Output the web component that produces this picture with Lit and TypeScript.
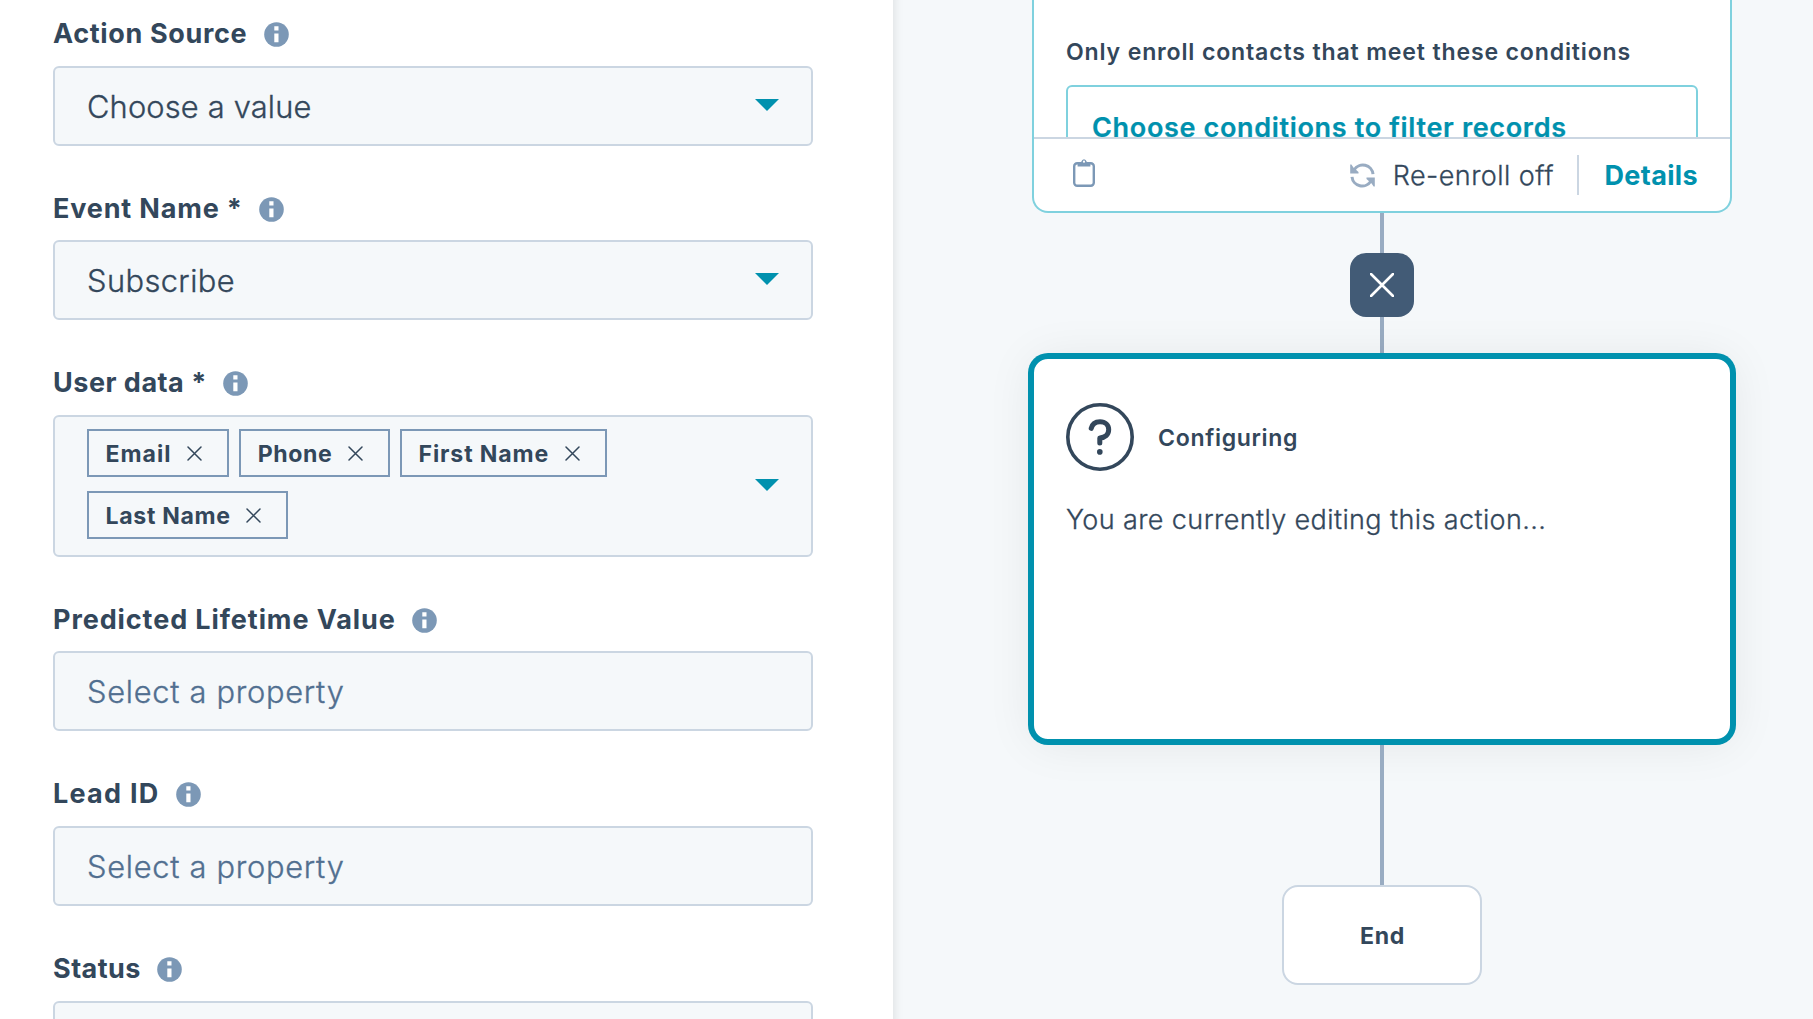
import { LitElement, html, css, svg, nothing } from "lit";
import { customElement, property } from "lit/decorators.js";
import { classMap } from "lit/directives/class-map.js";

interface Tag {
  label: string;
  tracking: number;
}

interface Field {
  label: string;
  tracking: number;
  kind: "select" | "tags" | "property";
  value?: string;
  valueTracking?: number;
  tags?: Tag[];
  tight?: boolean;
}

const FIELDS: Field[] = [
  { label: "Action Source", tracking: 0.65, kind: "select", value: "Choose a value", valueTracking: 0.18 },
  { label: "Event Name *", tracking: 0.83, kind: "select", value: "Subscribe", valueTracking: 0.42, tight: true },
  {
    label: "User data *",
    tracking: 0.5,
    kind: "tags",
    tags: [
      { label: "Email", tracking: 1.0 },
      { label: "Phone", tracking: 0.62 },
      { label: "First Name", tracking: 0.88 },
      { label: "Last Name", tracking: 0.68 },
    ],
  },
  { label: "Predicted Lifetime Value", tracking: 0.91, kind: "property", value: "Select a property", valueTracking: 0.72, tight: true },
  { label: "Lead ID", tracking: 1.25, kind: "property", value: "Select a property", valueTracking: 0.72 },
  { label: "Status", tracking: 0.45, kind: "property" },
];

const infoIcon = svg`<svg class="info" viewBox="0 0 25 25" width="25" height="25">
  <circle cx="12.5" cy="12.5" r="12.3" fill="#7c98b6"/>
  <path d="M10.3 4.3h4.2v4.2h-4.2zM10.3 11.4h4.2v8.8h-4.2z" fill="#fff"/>
</svg>`;

const cross = (size: number, stroke: number) => svg`<svg class="cross" viewBox="0 0 ${size} ${size}" width=${size} height=${size}>
  <path d="M1 1L${size - 1} ${size - 1}M${size - 1} 1L1 ${size - 1}" fill="none" stroke="currentColor" stroke-width=${stroke} stroke-linecap="round"/>
</svg>`;

@customElement("form-field")
class FormField extends LitElement {
  @property({ attribute: false }) field!: Field;

  static styles = css`
    :host { display: block; }
    .head { display: flex; align-items: center; height: 24px; margin-bottom: 21px; }
    .head.tight { margin-bottom: 20px; }
    .label { padding-top: 2px; font-size: 27px; font-weight: 700; line-height: 24px; white-space: pre; }
    .info { margin: 2px 0 0 16.3px; flex: none; }
    .box {
      box-sizing: border-box; display: flex; align-items: center; justify-content: space-between;
      height: 80px; padding: 0 32px; border: 2px solid #cbd6e2; border-radius: 6px; background: #f5f8fa;
    }
    .box.tags { height: 142px; }
    .value {
      padding-top: 2px; font-size: 30.8px; font-weight: 300; line-height: 40px; white-space: nowrap;
      -webkit-text-stroke: 0.35px currentColor;
    }
    .value.placeholder { color: #516f90; }
    .caret { flex: none; width: 24px; height: 12px; margin-bottom: 2px; fill: #0091ae; }
    .chips { display: flex; flex-wrap: wrap; gap: 14px 10px; width: 560px; padding-bottom: 4px; }
    .chip {
      box-sizing: border-box; display: flex; align-items: center; height: 48px;
      padding: 0 25px 0 16.5px; border: 2px solid #7c98b6; line-height: 28px;
      font-size: 23.1px; font-weight: 700; white-space: nowrap;
    }
    .chip span { padding-top: 2px; }
    .cross { margin-left: 15.6px; flex: none; }
  `;

  render() {
    const f = this.field;
    return html`
      <div class=${classMap({ head: true, tight: !!f.tight })}>
        <span class="label" style="letter-spacing:${f.tracking}px">${f.label}</span>${infoIcon}
      </div>
      <div class=${classMap({ box: true, tags: f.kind === "tags" })}>
        ${f.tags
          ? html`<div class="chips">
              ${f.tags.map((t) => html`<div class="chip"><span style="letter-spacing:${t.tracking}px">${t.label}</span>${cross(15, 1.5)}</div>`)}
            </div>`
          : f.value
            ? html`<span class=${classMap({ value: true, placeholder: f.kind === "property" })} style="letter-spacing:${f.valueTracking ?? 0}px">${f.value}</span>`
            : nothing}
        ${f.kind === "property" ? nothing : html`<svg class="caret" viewBox="0 0 24 12"><path d="M0 0h24L12 12z"/></svg>`}
      </div>
    `;
  }
}

@customElement("app-root")
class AppRoot extends LitElement {
  static styles = css`
    :host {
      display: flex; width: 100%; height: 1019px; overflow: hidden;
      font-family: Inter, "Liberation Sans", sans-serif; color: #33475b; background: #f5f8fa;
    }
    .panel {
      box-sizing: border-box; flex: none; width: 893px; height: 1019px; padding: 21px 80px 0 53px;
      overflow: hidden; background: #fff;
    }
    form-field { margin-bottom: 50px; }
    .canvas {
      box-sizing: border-box; flex: 1; display: flex; flex-direction: column; align-items: center;
      padding-left: 58px; box-shadow: inset 12px 0 10px -10px rgba(0, 0, 0, 0.09);
    }
    .trigger {
      box-sizing: border-box; flex: none; width: 700px; height: 213px; overflow: hidden; background: #fff;
      border: 2px solid #7fd1de; border-top: 0; border-radius: 0 0 16px 16px;
    }
    .body { box-sizing: border-box; height: 137px; padding: 37px 32px 0; overflow: hidden; }
    .hint { font-size: 23.1px; font-weight: 600; line-height: 30px; letter-spacing: 0.83px; white-space: nowrap; }
    .filter {
      margin-top: 18px; padding: 24px 24px; border: 2px solid #7fd1de; border-radius: 6px; color: #0091ae;
      font-size: 27px; font-weight: 600; line-height: 34px; letter-spacing: 0.67px; white-space: nowrap;
      -webkit-text-stroke: 0.25px currentColor;
    }
    .foot {
      display: flex; align-items: center; height: 72px; padding: 0 32px 0 39px; border-top: 2px solid #cbd6e2;
      font-size: 27px; white-space: nowrap;
    }
    .clipboard { margin: -5px auto 0 0; }
    .enroll { margin-left: 18px; font-weight: 300; letter-spacing: 0.45px; -webkit-text-stroke: 0.3px currentColor; }
    .rule { width: 2px; height: 40px; margin: 0 25.5px 0 23px; background: #cbd6e2; }
    .details { color: #0091ae; font-weight: 700; letter-spacing: 0.35px; }
    .line { flex: none; width: 4px; background: #99acc2; }
    .line.upper { height: 40px; }
    .line.middle { height: 36px; margin-bottom: 4px; }
    .line.lower { height: 140px; margin-top: 4px; }
    .close {
      flex: none; display: flex; align-items: center; justify-content: center; width: 64px; height: 64px;
      border-radius: 16px; background: #425b76; color: #fff;
    }
    .action {
      box-sizing: border-box; flex: none; width: 700px; height: 384px; padding: 44px 32px; background: #fff;
      border: 2px solid #0091ae; border-radius: 16px;
      box-shadow: 0 0 0 4px #0091ae, 0 2px 48px rgba(0, 0, 0, 0.08);
    }
    .title { display: flex; align-items: center; height: 68px; font-size: 23.1px; font-weight: 600; letter-spacing: 0.66px; }
    .title svg { margin-right: 24px; }
    .title span { padding-top: 2px; }
    .note {
      margin-top: 29px; font-size: 27px; font-weight: 300; line-height: 40px; letter-spacing: 0.39px;
      white-space: nowrap; -webkit-text-stroke: 0.3px currentColor;
    }
    .end {
      box-sizing: border-box; flex: none; display: flex; align-items: center; justify-content: center;
      width: 200px; height: 100px; padding: 2px 0 0 1px; background: #fff; border: 2px solid #cbd6e2; border-radius: 16px;
      font-size: 23.1px; font-weight: 700; letter-spacing: 0.7px;
    }
  `;

  render() {
    return html`
      <section class="panel">
        ${FIELDS.map((f) => html`<form-field .field=${f}></form-field>`)}
      </section>
      <section class="canvas">
        <div class="trigger">
          <div class="body">
            <div class="hint">Only enroll contacts that meet these conditions</div>
            <div class="filter">Choose conditions to filter records</div>
          </div>
          <div class="foot">
            <svg class="clipboard" width="22" height="28" viewBox="0 0 22 28">
              <rect x="1.2" y="4.2" width="19.6" height="22.6" rx="3" fill="none" stroke="#7c98b6" stroke-width="2.4"/>
              <path d="M4.6 7.4V5.2Q4.6 3.6 6.4 3.4L8.3 2.8Q9 0.2 11 0.2T13.7 2.8L15.6 3.4Q17.4 3.6 17.4 5.2V7.4z" fill="#7c98b6"/>
              <circle cx="11" cy="2.7" r="1.1" fill="#fff"/>
            </svg>
            <svg width="25" height="25" viewBox="0 0 25 25" fill="none" stroke="#99acc2">
              <path d="M4.2 6.8A10.2 10.2 0 0 1 23 11.2M20.8 18.2A10.2 10.2 0 0 1 2 13.8" stroke-width="3"/>
              <path d="M0.2 1.6H1.4L3.4 4.4L8.5 9V10.4H0.2zM24.8 23.4H23.6L21.6 20.6L16.5 16V14.6H24.8z" fill="#99acc2" stroke="none"/>
            </svg>
            <span class="enroll">Re-enroll off</span>
            <span class="rule"></span>
            <span class="details">Details</span>
          </div>
        </div>
        <div class="line upper"></div>
        <div class="close">${cross(24, 2.6)}</div>
        <div class="line middle"></div>
        <div class="action">
          <div class="title">
            <svg width="68" height="68" viewBox="0 0 68 68" fill="none" stroke="#33475b">
              <circle cx="34" cy="34" r="32.2" stroke-width="3.6"/>
              <path d="M25.2 25.4C26.2 20.8 29.8 18.7 34 18.7C39.4 18.7 42.7 22.2 42.7 26.6C42.7 31.6 39 34.6 33.8 35V40" stroke-width="5" stroke-linecap="round" stroke-linejoin="round"/>
              <circle cx="33.8" cy="48.9" r="2.8" fill="#33475b" stroke="none"/>
            </svg>
            <span>Configuring</span>
          </div>
          <div class="note">You are currently editing this action...</div>
        </div>
        <div class="line lower"></div>
        <div class="end">End</div>
      </section>
    `;
  }
}
